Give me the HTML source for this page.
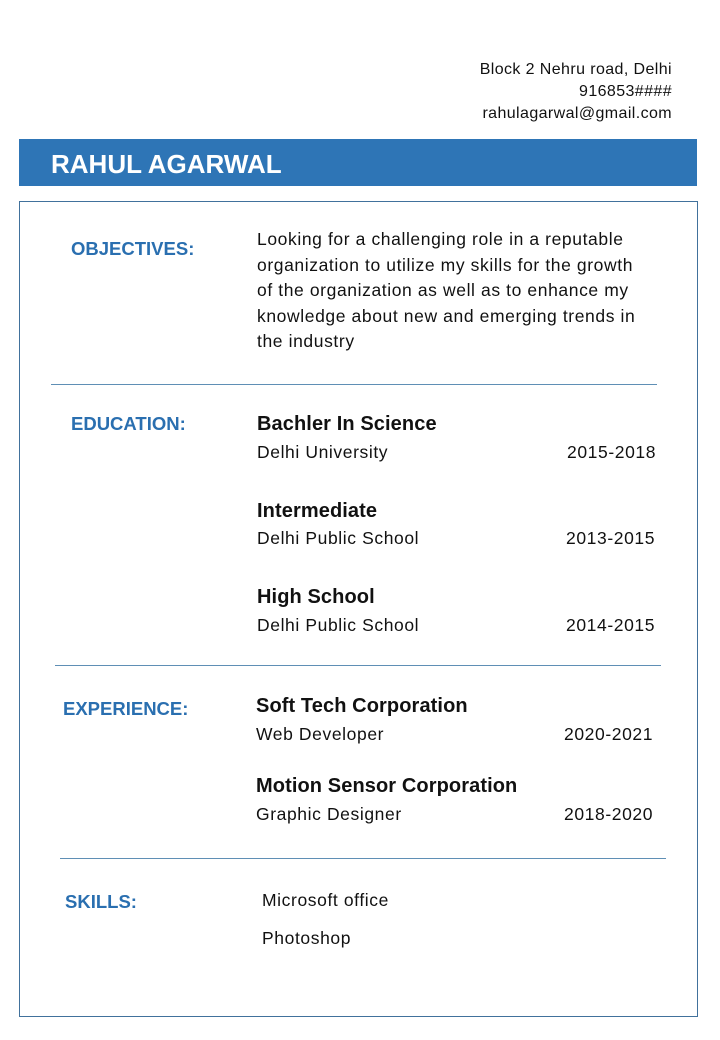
<!DOCTYPE html>
<html><head><meta charset="utf-8"><style>
body{margin:0;width:720px;height:1040px;background:#fff;position:relative;font-family:"Liberation Sans",sans-serif;color:#111;overflow:hidden}
.a{position:absolute;white-space:nowrap}
.r{text-align:right}
.h{color:#2a6fb0;font-weight:bold;font-size:18.5px}
.t{font-size:17.5px;letter-spacing:0.6px}
.b{font-weight:bold;font-size:20px;letter-spacing:0.1px}
.line{position:absolute;height:1px;background:#5f8fb5}
</style></head><body>
<div class="a r" style="right:48px;top:59px;font-size:16px;letter-spacing:0.4px;line-height:22px">Block 2 Nehru road, Delhi<br>916853####<br>rahulagarwal@gmail.com</div>
<div class="a" style="left:19px;top:139px;width:678px;height:47px;background:#2e75b6"></div>
<div class="a" style="left:51px;top:148px;color:#fff;font-weight:bold;font-size:26px;line-height:32px">RAHUL AGARWAL</div>
<div class="a" style="left:19px;top:201px;width:677px;height:814px;border:1px solid #41719c"></div>

<div class="a h" style="left:71px;top:238px">OBJECTIVES:</div>
<div class="a t" style="left:257px;top:227px;line-height:25.5px">Looking for a challenging role in a reputable<br>organization to utilize my skills for the growth<br>of the organization as well as to enhance my<br>knowledge about new and emerging trends in<br>the industry</div>
<div class="line" style="left:51px;top:384px;width:606px"></div>

<div class="a h" style="left:71px;top:413px">EDUCATION:</div>
<div class="a b" style="left:257px;top:413px">Bachler In Science</div>
<div class="a t" style="left:257px;top:442px">Delhi University</div>
<div class="a t" style="left:567px;top:442px">2015-2018</div>
<div class="a b" style="left:257px;top:500px">Intermediate</div>
<div class="a t" style="left:257px;top:528px">Delhi Public School</div>
<div class="a t" style="left:566px;top:528px">2013-2015</div>
<div class="a b" style="left:257px;top:586px">High School</div>
<div class="a t" style="left:257px;top:615px">Delhi Public School</div>
<div class="a t" style="left:566px;top:615px">2014-2015</div>
<div class="line" style="left:55px;top:665px;width:606px"></div>

<div class="a h" style="left:63px;top:698px">EXPERIENCE:</div>
<div class="a b" style="left:256px;top:695px">Soft Tech Corporation</div>
<div class="a t" style="left:256px;top:724px">Web Developer</div>
<div class="a t" style="left:564px;top:724px">2020-2021</div>
<div class="a b" style="left:256px;top:775px">Motion Sensor Corporation</div>
<div class="a t" style="left:256px;top:804px">Graphic Designer</div>
<div class="a t" style="left:564px;top:804px">2018-2020</div>
<div class="line" style="left:60px;top:858px;width:606px"></div>

<div class="a h" style="left:65px;top:891px">SKILLS:</div>
<div class="a t" style="left:262px;top:890px">Microsoft office</div>
<div class="a t" style="left:262px;top:928px">Photoshop</div>
</body></html>
